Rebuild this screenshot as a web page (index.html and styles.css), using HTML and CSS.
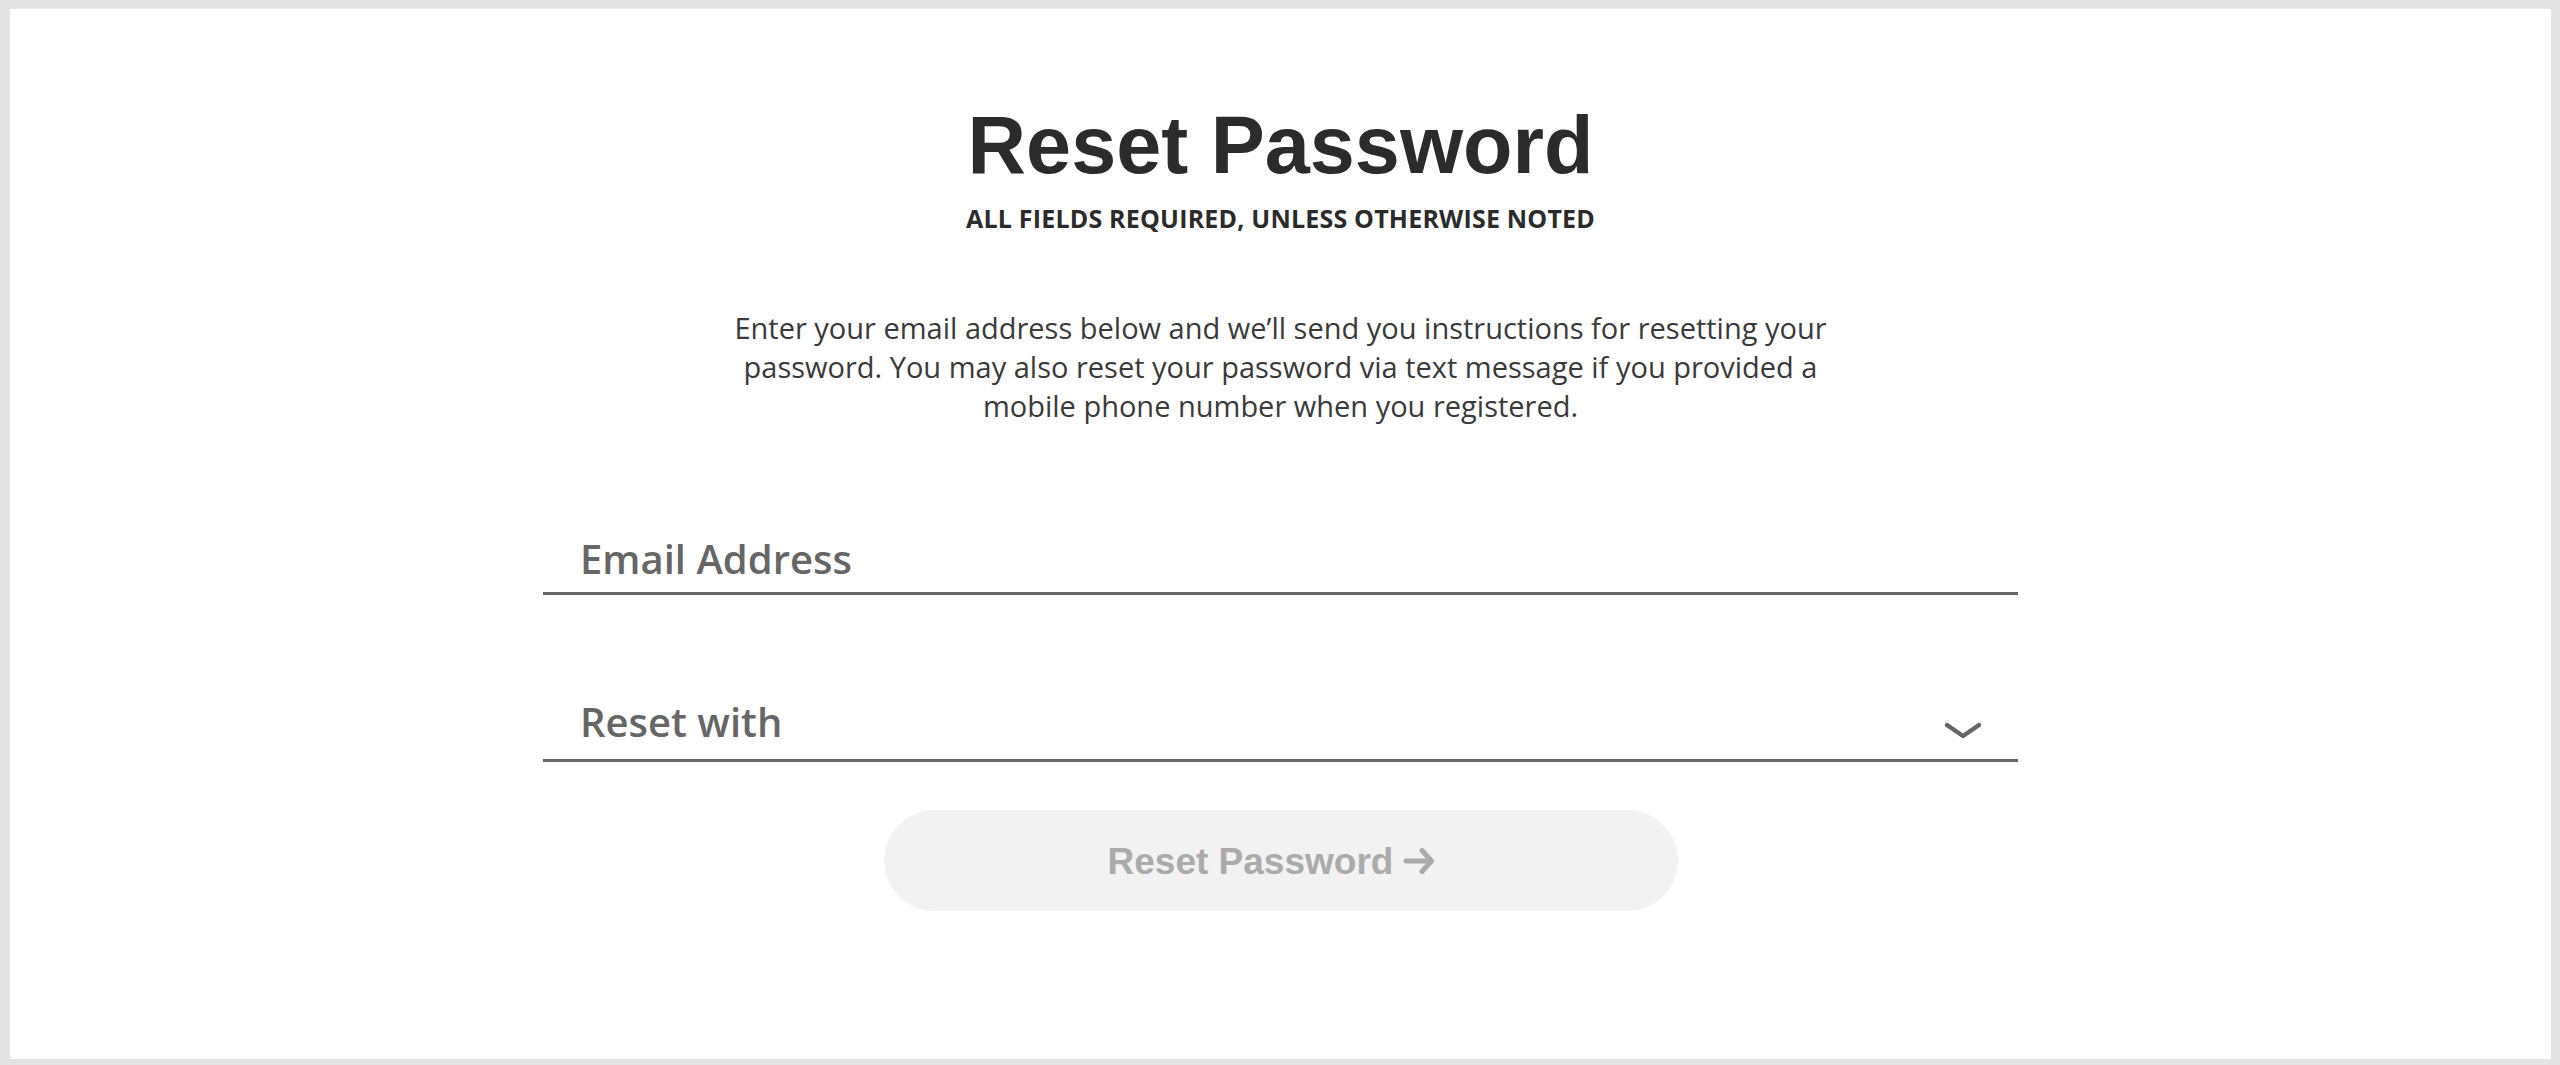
FILE: index.html
```html
<!DOCTYPE html>
<html lang="en">
<head>
    <meta charset="UTF-8">
    <meta name="viewport" content="width=device-width, initial-scale=1.0">
    <title>Reset Password</title>
    <link rel="stylesheet" href="styles.css">
</head>
<body>
    <div class="panel">
        <h1>Reset Password</h1>
        <p class="required">ALL FIELDS REQUIRED, UNLESS OTHERWISE NOTED</p>
        <p class="intro">Enter your email address below and we&rsquo;ll send you instructions for resetting your password. You may also reset your password via text message if you provided a mobile phone number when you registered.</p>
        <form class="form">
            <div class="field email">
                <span class="label">Email Address</span>
            </div>
            <div class="field select">
                <span class="label">Reset with</span>
                <svg class="chevron" width="40" height="19" viewBox="0 0 40 19">
                    <path d="M4 4 L20 15 L36 4" fill="none" stroke="#666" stroke-width="4.5" stroke-linecap="round" stroke-linejoin="round"/>
                </svg>
            </div>
            <button type="button" class="submit" disabled>
                Reset Password
                <svg class="arrow" width="32" height="28" viewBox="0 0 32 28">
                    <path d="M3 14 H27 M19 3.5 L28.5 14 L19 24.5" fill="none" stroke="#ababab" stroke-width="5" stroke-linecap="round" stroke-linejoin="round"/>
                </svg>
            </button>
        </form>
    </div>
</body>
</html>
```

FILE: styles.css
```css
html, body {
    height: 100%;
}
body {
    margin: 0;
    padding: 9px 9px 6px 10px;
    box-sizing: border-box;
    background: #e4e4e4;
    font-family: "Open Sans", sans-serif;
    overflow: hidden;
}
.panel {
    background: #fff;
    height: 100%;
    padding-top: 96px;
    box-sizing: border-box;
    display: flex;
    flex-direction: column;
    align-items: center;
}
h1 {
    margin: 0;
    font-family: "Liberation Sans", Arial, sans-serif;
    font-weight: bold;
    font-size: 81px;
    line-height: 81px;
    color: #2b2b2b;
}
.required {
    margin: 17px 0 0;
    font-weight: 700;
    font-size: 25px;
    line-height: 30px;
    letter-spacing: 0.2px;
    color: #2b2b2b;
}
.intro {
    margin: 75px 0 0;
    width: 1120px;
    text-align: center;
    font-size: 29px;
    line-height: 39px;
    color: #3a3a3a;
}
.form {
    width: 1475px;
    margin-top: 110px;
    display: flex;
    flex-direction: column;
    align-items: center;
}
.field {
    align-self: stretch;
    display: flex;
    align-items: flex-end;
    justify-content: space-between;
    padding-left: 37px;
    border-bottom: 3px solid #666;
}
.label {
    font-weight: 600;
    font-size: 40px;
    line-height: 48px;
    color: #666;
}
.email {
    padding-bottom: 9px;
}
.select {
    margin-top: 103px;
    padding-bottom: 13px;
    padding-right: 35px;
}
.chevron {
    margin-bottom: 6px;
}
.submit {
    margin-top: 48px;
    width: 794px;
    height: 101px;
    border: none;
    border-radius: 51px;
    background: #f2f2f2;
    color: #ababab;
    font-family: "Liberation Sans", Arial, sans-serif;
    font-weight: bold;
    font-size: 37px;
    display: flex;
    align-items: center;
    justify-content: center;
    padding: 2px 18px 0 0;
}
.arrow {
    margin-left: 10px;
    margin-top: -2px;
}
```
